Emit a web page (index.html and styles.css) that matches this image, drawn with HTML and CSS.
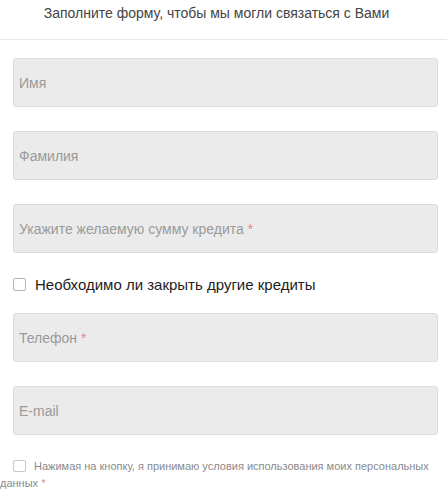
FILE: index.html
```html
<!DOCTYPE html>
<html lang="ru">
<head>
<meta charset="utf-8">
<link rel="stylesheet" href="styles.css">
</head>
<body>
<div class="head">Заполните форму, чтобы мы могли связаться с Вами</div>
<form class="form">
  <div class="field"><span class="ph">Имя</span></div>
  <div class="field"><span class="ph">Фамилия</span></div>
  <div class="field"><span class="ph">Укажите желаемую сумму кредита <span class="req">*</span></span></div>
  <label class="check"><span class="box"></span><span>Необходимо ли закрыть другие кредиты</span></label>
  <div class="field"><span class="ph">Телефон <span class="req">*</span></span></div>
  <div class="field"><span class="ph">E-mail</span></div>
  <div class="agree"><span class="box small"></span><span class="agree-text">Нажимая на кнопку, я принимаю условия использования моих персональных данных <span class="req">*</span></span></div>
</form>
</body>
</html>
```

FILE: styles.css
```css
html, body { margin: 0; padding: 0; background: #fff; }
body { font-family: "Liberation Sans", Arial, sans-serif; color: #333; width: 447px; overflow: hidden; }
.head {
  height: 40px;
  box-sizing: border-box;
  padding-top: 4px;
  padding-right: 14px;
  text-align: center;
  font-size: 14px;
  line-height: 18px;
  color: #444;
  border-bottom: 1px solid #e8e8e8;
}
.form { padding: 18px 9px 0 13px; display: flex; flex-direction: column; }
.field {
  height: 49px;
  box-sizing: border-box;
  background: #ebebeb;
  border: 1px solid #dcdcdc;
  border-radius: 3px;
  display: flex;
  align-items: center;
  padding-left: 5px;
  margin-bottom: 24px;
}
.ph { font-size: 14px; color: #9a9a9a; }
.req { color: #e08a8a; }
.check {
  display: flex;
  align-items: center;
  font-size: 15px;
  color: #222;
  height: 14px;
  margin-bottom: 22px;
}
.box {
  width: 11px; height: 11px;
  border: 1px solid #b5b5b5;
  border-radius: 2px;
  background: #fff;
  margin-right: 9px;
  flex: none;
}
.agree {
  margin-top: -1px;
  margin-left: -13px;
  font-size: 11px;
  line-height: 17px;
  color: #8a8a8a;
}
.agree .box.small {
  display: inline-block;
  vertical-align: -2px;
  margin-left: 13px;
  margin-right: 8px;
  width: 11px; height: 10px;
  border-color: #c8c8c8;
}
```
